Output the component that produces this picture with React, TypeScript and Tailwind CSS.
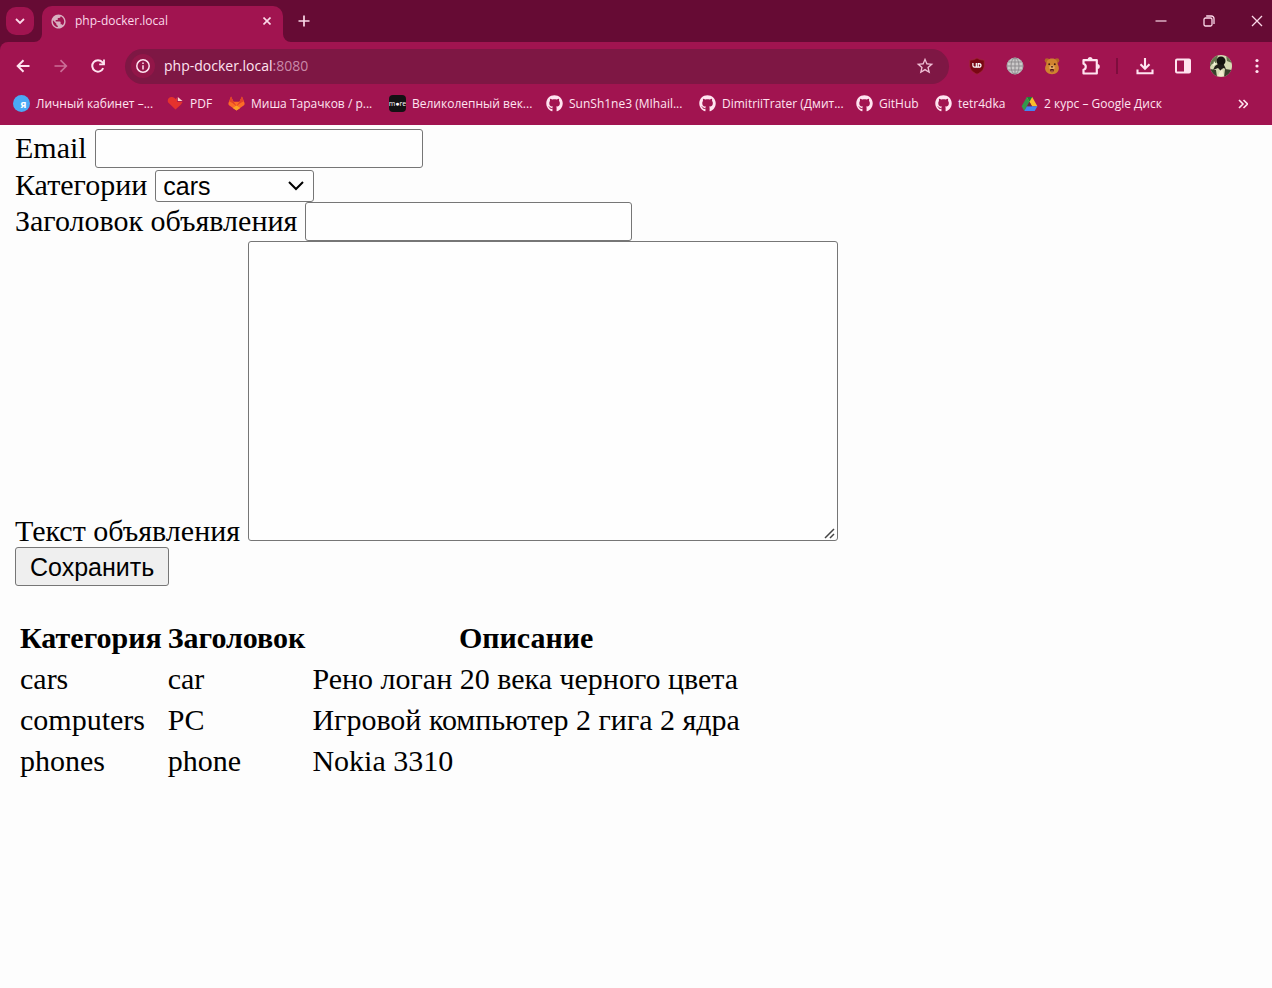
import type { ReactNode } from "react";
import { FaGithub } from "react-icons/fa";
import { MdPublic, MdStarBorder } from "react-icons/md";

const stroke = {
  fill: "none",
  stroke: "currentColor",
  strokeWidth: 2,
} as const;

function TabStrip() {
  return (
    <header className="flex h-[42px] items-end bg-[#660b34] text-[#fbd9e8]">
      <button
        aria-label="Поиск вкладок"
        className="mb-[7px] ml-1.5 flex size-7 items-center justify-center rounded-[10px] bg-[#a11450]"
      >
        <svg viewBox="0 0 10 10" className="size-2.5" {...stroke} strokeWidth={1.8}>
          <path d="M1 3l4 4 4-4" />
        </svg>
      </button>
      <div className="relative ml-2 flex h-9 w-[241px] items-center rounded-t-[10px] bg-[#a11450] pr-2 pb-1.5 pl-2">
        <svg viewBox="0 0 8 8" className="absolute bottom-0 -left-2 size-2 text-[#a11450]">
          <path d="M8 0v8H0a8 8 0 0 0 8-8z" fill="currentColor" />
        </svg>
        <svg viewBox="0 0 8 8" className="absolute -right-2 bottom-0 size-2 text-[#a11450]">
          <path d="M0 0v8h8a8 8 0 0 1-8-8z" fill="currentColor" />
        </svg>
        <MdPublic className="size-[17px] shrink-0 text-[#d9b0c1]" />
        <span className="ml-2 grow text-xs leading-4 whitespace-nowrap">php-docker.local</span>
        <button aria-label="Закрыть вкладку" className="flex size-4 items-center justify-center">
          <svg viewBox="0 0 8 8" className="size-2" {...stroke} strokeWidth={1.6}>
            <path d="M.5.5l7 7M7.5.5l-7 7" />
          </svg>
        </button>
      </div>
      <button aria-label="Новая вкладка" className="mb-[13px] ml-[13px] flex size-4 items-center justify-center">
        <svg viewBox="0 0 12 12" className="size-3" {...stroke} strokeWidth={1.7}>
          <path d="M6 .5v11M.5 6h11" />
        </svg>
      </button>
      <div className="mb-[11px] ml-auto flex">
        <button aria-label="Свернуть" className="flex h-5 w-12 items-center justify-center">
          <svg viewBox="0 0 12 12" className="size-3" {...stroke} strokeWidth={1.2}>
            <path d="M.5 6h11" />
          </svg>
        </button>
        <button aria-label="Восстановить" className="flex h-5 w-12 items-center justify-center">
          <svg viewBox="0 0 12 12" className="size-3" {...stroke} strokeWidth={1.3}>
            <rect x="1" y="3" width="8" height="8" rx="1.5" />
            <path d="M3.2 1H8.5a2.500 2.500 0 0 1 2.500 2.500V9" />
          </svg>
        </button>
        <button aria-label="Закрыть" className="flex h-5 w-[39px] items-center justify-center pl-2">
          <svg viewBox="0 0 12 12" className="size-3" {...stroke} strokeWidth={1.3}>
            <path d="M1 1l10 10M11 1L1 11" />
          </svg>
        </button>
      </div>
    </header>
  );
}

function ToolButton({ label, className, children }: { label: string; className: string; children: ReactNode }) {
  return (
    <button aria-label={label} className={`flex h-9 shrink-0 items-center justify-center ${className}`}>
      {children}
    </button>
  );
}

function Toolbar() {
  return (
    <div className="flex h-12 items-center text-[#ffe4f0]">
      <div className="flex pl-1">
        <ToolButton label="Назад" className="w-[38px]">
          <svg viewBox="0 0 14 14" className="size-3.5" {...stroke}>
            <path d="M13.500 7H2M7.500 1.200L1.700 7l5.800 5.800" />
          </svg>
        </ToolButton>
        <ToolButton label="Вперёд" className="w-[37px] text-[#cb6e97]">
          <svg viewBox="0 0 14 14" className="size-3.5" {...stroke} strokeWidth={1.7}>
            <path d="M.5 7H12M6.500 1.200L12.300 7l-5.800 5.800" />
          </svg>
        </ToolButton>
        <ToolButton label="Обновить" className="w-[38px]">
          <svg viewBox="0 0 14 14" className="size-3.5" {...stroke}>
            <path d="M12.200 9.200A5.700 5.700 0 1 1 11.300 3.200L13 5" />
            <path d="M13 .5V5.300H8.200" strokeWidth={1.8} />
          </svg>
        </ToolButton>
      </div>
      <div className="mr-[9px] ml-2 flex h-[35px] grow items-center rounded-full bg-[#7e1744] pr-3.5 pl-1.5">
        <button aria-label="Сведения о сайте" className="flex size-6 shrink-0 items-center justify-center rounded-full bg-[#921648]">
          <svg viewBox="0 0 14 14" className="size-3.5" {...stroke} strokeWidth={1.5}>
            <circle cx="7" cy="7" r="6.200" />
            <path d="M7 6.200V10.500M7 3.500V5" />
          </svg>
        </button>
        <p className="ml-[9px] grow text-sm leading-5 whitespace-nowrap">
          php-docker.local<span className="text-[#c98aa8]">:8080</span>
        </p>
        <MdStarBorder className="size-5 text-[#f0bfd5]" />
      </div>
      <ToolButton label="uBlock Origin" className="w-[38px]">
        <svg viewBox="0 0 16 18" className="h-[18px] w-4">
          <path d="M8 1c2.500 1.700 4.500 2.100 7.200 2.200v5.300c0 4-3 6.800-7.200 8.700C3.800 15.300.8 12.500.8 8.500V3.200C3.500 3.100 5.500 2.700 8 1z" fill="#790713" stroke="#a32936" strokeWidth=".7" />
          <path d="M3.900 6.100v2.400q0 1.700 1.700 1.700h1.700V6.100M7.300 10.200h2.400q2.300 0 2.300-1.800t-2.300-1.800h-.5v3.200" fill="none" stroke="#fff" strokeWidth="1.200" />
        </svg>
      </ToolButton>
      <ToolButton label="Переводчик" className="w-[37px]">
        <svg viewBox="0 0 18 18" className="size-[18px]" fill="none" stroke="#8e8b8e" strokeWidth="1">
          <circle cx="9" cy="9" r="8" fill="#cccaca" stroke="#aaa" />
          <ellipse cx="9" cy="9" rx="4" ry="8" />
          <path d="M9 1v16M1 9h16M2.500 5h13M2.500 13h13" />
        </svg>
      </ToolButton>
      <ToolButton label="Медведь" className="w-[38px]">
        <svg viewBox="0 0 16 18" className="h-[18px] w-4">
          <circle cx="3" cy="3.500" r="2.300" fill="#b56624" />
          <circle cx="13" cy="3.500" r="2.300" fill="#b56624" />
          <path d="M8 1.500c4 0 5.500 2.500 5.800 6 1.500 2.500 1.600 5.500-.3 7.500-1.600 1.800-3.300 2.200-5.500 2.200S4.100 16.800 2.500 15C.6 13 .7 10 2.200 7.500 2.500 4 4 1.500 8 1.500z" fill="#d0832f" />
          <circle cx="5.200" cy="7.200" r=".9" fill="#3b1810" />
          <circle cx="10.800" cy="7.200" r=".9" fill="#3b1810" />
          <ellipse cx="8" cy="10.500" rx="2.700" ry="2.300" fill="#e7ab62" />
          <path d="M6.600 9.300h2.800L8 11z" fill="#32130e" />
          <path d="M6.300 12h3.400v2q-1.700 2.500-3.400 0z" fill="#4e1515" />
          <path d="M7.200 13.500h1.600v1.300H7.200z" fill="#e77b67" />
        </svg>
      </ToolButton>
      <ToolButton label="Расширения" className="w-[39px]">
        <svg viewBox="0 0 20 20" className="size-5">
          <path d="M2.500 4.200H15.800V17.500H2.500V13.800c3-.7 3-5.300 0-6z" fill="none" stroke="currentColor" strokeWidth="2.200" strokeLinejoin="round" />
          <path d="M6.700 3.500a2.500 2.500 0 0 1 5 0zM16.300 8a2.500 2.500 0 0 1 0 5z" fill="currentColor" />
        </svg>
      </ToolButton>
      <div className="flex w-3.5 shrink-0 justify-center">
        <span className="h-4 w-0.5 bg-[#7e0d3d]" />
      </div>
      <ToolButton label="Загрузки" className="w-[42px]">
        <svg viewBox="0 0 18 18" className="size-[18px]" {...stroke} strokeWidth={2.100}>
          <path d="M9 1v10.500M4.500 7.200L9 11.700l4.500-4.500M1.500 12.500v3.700h15v-3.700" />
        </svg>
      </ToolButton>
      <ToolButton label="Боковая панель" className="w-[34px]">
        <svg viewBox="0 0 16 16" className="size-4">
          <rect x="1" y="1.500" width="14" height="13" rx="1" fill="none" stroke="currentColor" strokeWidth="2" />
          <path d="M9 1h6v14H9z" fill="currentColor" />
        </svg>
      </ToolButton>
      <ToolButton label="Профиль" className="w-[42px]">
        <svg viewBox="0 0 22 22" className="size-[22px] rounded-full">
          <path d="M0 0h22v22H0z" fill="#d7dbb4" />
          <path d="M0 0h8L6 8 2 9 0 12zM16 0h6v8l-5-2z" fill="#66724c" />
          <circle cx="11" cy="6" r="4.500" fill="#15140f" />
          <path d="M8 9l6 1 2 4-3-1-2 3-3-3-5 2 2-4z" fill="#201e18" />
          <path d="M0 14l6 1 1 7H0zM15 14l7 1v7h-8z" fill="#3a3e2b" />
          <path d="M10 16l2-2 2 7H8z" fill="#f1edcf" />
          <path d="M4 6l2 3-3 2z" fill="#fafbe0" />
        </svg>
      </ToolButton>
      <ToolButton label="Меню" className="w-[30px]">
        <svg viewBox="0 0 4 16" className="h-4 w-1" fill="currentColor">
          <circle cx="2" cy="2.500" r="1.600" />
          <circle cx="2" cy="8" r="1.600" />
          <circle cx="2" cy="13.500" r="1.600" />
        </svg>
      </ToolButton>
    </div>
  );
}

const github = <FaGithub className="size-[17px]" />;

const bookmarks: { label: string; width: string; icon: ReactNode }[] = [
  {
    label: "Личный кабинет –...",
    width: "w-[154px]",
    icon: (
      <span className="flex size-[17px] items-center justify-center rounded-full bg-[#4ba9f5] pl-1 text-[10px] leading-none font-bold text-white">
        я
      </span>
    ),
  },
  {
    label: "PDF",
    width: "w-[61px]",
    icon: (
      <svg viewBox="0 0 17 17" className="size-[17px]">
        <path d="M8.500 14.500L1.200 7.600C-.3 4.500 2 1.800 4.800 2c2 0 3 1 3.700 2.200L10 2.500v4.200h5.700L14 9.500z" fill="#e5322d" />
        <path d="M10.800 2v4h4.700z" fill="#fbd3cf" />
      </svg>
    ),
  },
  {
    label: "Миша Тарачков / p...",
    width: "w-[161px]",
    icon: (
      <svg viewBox="0 0 18 17" className="h-[17px] w-[17px]">
        <path d="M9 16L.7 10 .4 8.300 3.200 1l2.700 5.700h6.200L14.800 1l2.800 7.300-.3 1.700z" fill="#fc6d26" />
        <path d="M3.200 1l2.700 5.700L9 11l3.100-4.300L14.800 1l2 5-3.500 2L9 11.500 4.700 8 1.200 6z" fill="#e24329" />
        <path d="M9 10.500l4 2.800L9 16l-4-2.700z" fill="#fca326" />
      </svg>
    ),
  },
  {
    label: "Великолепный век...",
    width: "w-[157px]",
    icon: (
      <span className="flex size-[17px] items-center justify-center overflow-hidden rounded-sm bg-[#131113] text-[7px] leading-none text-white">
        m●re
      </span>
    ),
  },
  { label: "SunSh1ne3 (MIhail...", width: "w-[153px]", icon: github },
  { label: "DimitriiTrater (Дмит...", width: "w-[157px]", icon: github },
  { label: "GitHub", width: "w-[79px]", icon: github },
  { label: "tetr4dka", width: "w-[86px]", icon: github },
  {
    label: "2 курс – Google Диск",
    width: "w-[160px]",
    icon: (
      <svg viewBox="0 0 17 16" className="h-4 w-[17px]">
        <path d="M5.800 1h5.400L8.500 5.800 3.300 15 .6 10.200z" fill="#34964b" />
        <path d="M5.800 1h5.400l5.200 9.200H11z" fill="#fbbc2c" />
        <path d="M3.300 15L6 10.200h10.400L13.700 15z" fill="#4285f4" />
        <path d="M5.800 1h5.400L8.500 5.800z" fill="#188038" />
        <path d="M8.500 6l2.400 4.200H6.100z" fill="#75243f" />
      </svg>
    ),
  },
];

function BookmarksBar() {
  return (
    <nav aria-label="Закладки" className="flex h-[35px] items-center pb-2 pl-[13px] text-xs leading-4 text-[#ffe4f0]">
      {bookmarks.map((b) => (
        <a key={b.label} href="#" className={`flex shrink-0 items-center gap-1.5 whitespace-nowrap ${b.width}`}>
          <span className="shrink-0">{b.icon}</span>
          {b.label}
        </a>
      ))}
      <button aria-label="Другие закладки" className="mr-6 ml-auto">
        <svg viewBox="0 0 10 10" className="size-2.5" {...stroke} strokeWidth={1.600}>
          <path d="M1 1l4 4-4 4M5.500 1l4 4-4 4" />
        </svg>
      </button>
    </nav>
  );
}

const rows = [
  ["cars", "car", "Рено логан 20 века черного цвета"],
  ["computers", "PC", "Игровой компьютер 2 гига 2 ядра"],
  ["phones", "phone", "Nokia 3310"],
];

const field =
  "rounded-[3px] border border-[#767676] bg-[#fefefe] px-[7px] font-['Liberation_Sans',sans-serif] text-[25px] leading-7";

function AdForm() {
  return (
    <form>
      <div className="mb-0.5 flex items-center gap-2">
        <label htmlFor="email" className="pb-0.5 leading-7">Email</label>
        <input id="email" type="email" className={`h-[39px] w-[328px] ${field}`} />
      </div>
      <div className="flex items-center gap-2">
        <label htmlFor="category" className="pb-0.5 leading-7">Категории</label>
        <div className="relative flex">
          <select id="category" className={`h-8 w-[159px] appearance-none ${field}`}>
            <option>cars</option>
            <option>computers</option>
            <option>phones</option>
          </select>
          <svg viewBox="0 0 16 10" className="pointer-events-none absolute top-[11px] right-2.5 h-2.5 w-4" {...stroke}>
            <path d="M1 1l7 7 7-7" />
          </svg>
        </div>
      </div>
      <div className="flex items-center gap-2">
        <label htmlFor="title" className="pb-0.5 leading-7">Заголовок объявления</label>
        <input id="title" type="text" className={`h-[39px] w-[327px] ${field}`} />
      </div>
      <div className="flex items-end gap-2">
        <label htmlFor="text">Текст объявления</label>
        <div className="relative mb-1.5 flex">
          <textarea id="text" className={`h-[300px] w-[590px] resize-none ${field}`} />
          <svg viewBox="0 0 12 12" className="pointer-events-none absolute right-0.5 bottom-0.5 size-3 text-[#444]" {...stroke} strokeWidth={1.500}>
            <path d="M1 11L10 2M6 11l4-4" />
          </svg>
        </div>
      </div>
      <button
        type="button"
        className="block h-[39px] rounded-[3px] border border-[#767676] bg-[#efefef] px-3.5 font-['Liberation_Sans',sans-serif] text-[25px]"
      >
        Сохранить
      </button>
    </form>
  );
}

export default function App() {
  return (
    <div className="min-h-screen bg-[#fdfdfd] font-['Open_Sans','Noto_Sans',sans-serif]">
      <div className="bg-[#660b34]">
        <TabStrip />
        <div className="rounded-tl-lg bg-[#a11450]">
          <Toolbar />
          <BookmarksBar />
        </div>
      </div>
      <main className="px-[15px] pt-1 font-['Liberation_Serif',serif] text-[30px] leading-8 text-black">
        <AdForm />
        <table className="mt-[31px] text-left leading-[37px]">
          <thead>
            <tr className="h-[41px]">
              <th className="pr-1.5 pl-[5px]">Категория</th>
              <th className="pr-[7px]">Заголовок</th>
              <th className="text-center">Описание</th>
            </tr>
          </thead>
          <tbody>
            {rows.map(([category, title, text]) => (
              <tr key={category} className="h-[41px]">
                <td className="pr-1.5 pl-[5px]">{category}</td>
                <td>{title}</td>
                <td>{text}</td>
              </tr>
            ))}
          </tbody>
        </table>
      </main>
    </div>
  );
}
